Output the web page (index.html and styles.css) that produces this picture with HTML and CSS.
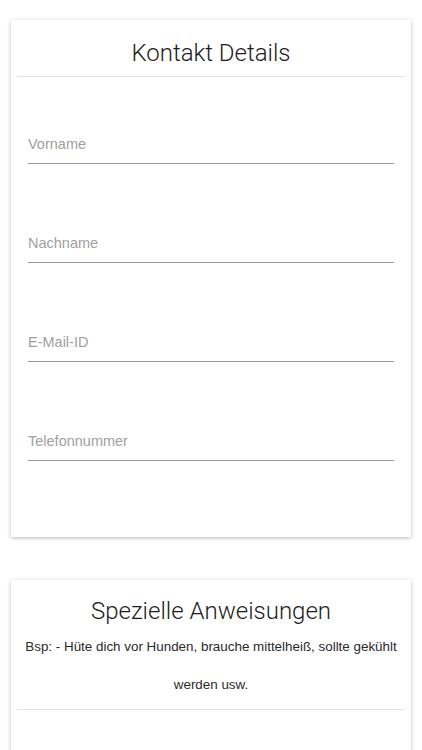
FILE: index.html
```html
<!DOCTYPE html>
<html lang="de">
<head>
<meta charset="utf-8">
<title>Kontakt Details</title>
<link rel="stylesheet" href="styles.css">
</head>
<body>
<div class="page">
  <section class="card card-contact">
    <h1 class="card-title">Kontakt Details</h1>
    <hr class="divider">
    <div class="fields">
      <div class="field"><span class="field-label">Vorname</span></div>
      <div class="field"><span class="field-label">Nachname</span></div>
      <div class="field"><span class="field-label">E-Mail-ID</span></div>
      <div class="field"><span class="field-label">Telefonnummer</span></div>
    </div>
  </section>
  <section class="card card-notes">
    <h1 class="card-title">Spezielle Anweisungen</h1>
    <p class="note">Bsp: - Hüte dich vor Hunden, brauche mittelheiß, sollte gekühlt werden usw.</p>
    <hr class="divider">
  </section>
</div>
</body>
</html>
```

FILE: styles.css
```css
html, body {
  margin: 0;
  padding: 0;
  background: #ffffff;
}
body {
  font-family: Roboto, "Liberation Sans", sans-serif;
  color: #222;
}
.page {
  display: flex;
  flex-direction: column;
  gap: 43px;
  padding: 20px 11px 0;
}
.card {
  width: 400px;
  background: #fff;
  box-shadow: 0 1px 4px rgba(0, 0, 0, 0.28);
  display: flex;
  flex-direction: column;
}
.card-title {
  margin: 0;
  font-weight: 300;
  font-size: 24px;
  line-height: 30px;
  text-align: center;
  color: #1c1c1c;
}
.divider {
  border: 0;
  height: 1px;
  background: #e2e2e2;
  margin: 0 6px;
}
.card-contact {
  padding-top: 18px;
  padding-bottom: 76px;
}
.card-contact .card-title {
  margin-bottom: 8px;
}
.fields {
  display: flex;
  flex-direction: column;
  gap: 69px;
  padding: 57px 17px 0;
}
.field {
  border-bottom: 1px solid #9a9a9a;
  padding-bottom: 9px;
}
.field-label {
  display: block;
  font-family: "Liberation Sans", Arial, sans-serif;
  font-size: 14.5px;
  line-height: 20px;
  color: #a0a0a0;
}
.card-notes {
  padding-top: 16px;
  height: 200px;
  box-sizing: border-box;
}
.note {
  margin: 2px 10px 5px;
  font-family: "Liberation Sans", Arial, sans-serif;
  font-size: 13.4px;
  line-height: 38px;
  text-align: center;
  color: #2a2a2a;
}
```
